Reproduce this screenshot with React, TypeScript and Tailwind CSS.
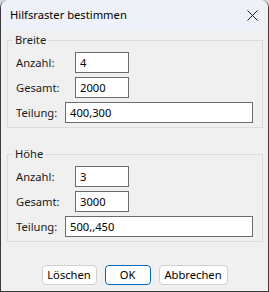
import React from 'react';

const font = { fontFamily: '"Noto Sans", "Segoe UI", sans-serif' };

function Field({ label, value, wide }: { label: string; value: string; wide?: boolean }) {
  return (
    <div className="flex items-center h-[21px]">
      <span className={`${wide ? 'w-[49px]' : 'w-[59px]'} text-[11.2px] text-[#1a1a1a] leading-none`}>{label}</span>
      <div
        className={`${wide ? 'w-[188px]' : 'w-[54px]'} h-[21px] bg-white border border-[#6b6b6b] flex items-center pl-[4px] text-[11.2px] text-black leading-none`}
      >
        {value}
      </div>
    </div>
  );
}

function Group({ title, rows }: { title: string; rows: [string, string][] }) {
  return (
    <div className="relative w-[256px] h-[88px] border border-[#dcdcdc] pl-[8px] pt-[11px] flex flex-col gap-[4px]">
      <span className="absolute -top-[9px] left-[5px] px-[2px] bg-[#f0f0f0] text-[11.2px] text-[#1a1a1a] leading-[16px]">
        {title}
      </span>
      {rows.map(([l, v], i) => (
        <Field key={l} label={l} value={v} wide={i === 2} />
      ))}
    </div>
  );
}

export default function App() {
  return (
    <div className="w-[269px] h-[292px] bg-[#d9d9d9]" style={font}>
      <div className="w-full h-full flex flex-col rounded-t-[8px] overflow-hidden border-x border-b border-[#3a3a3a] bg-[#f0f0f0]">
        {/* title bar */}
        <div className="h-[30px] bg-[#eef2f8] flex items-center justify-between pl-[9px] pr-[9px]">
          <span className="text-[11.2px] text-black leading-none">Hilfsraster bestimmen</span>
          <svg width="11" height="11" viewBox="0 0 11 11" className="mr-[1px]">
            <path d="M0.5 0.5 L10.5 10.5 M10.5 0.5 L0.5 10.5" stroke="#1a1a1a" strokeWidth="1" fill="none" />
          </svg>
        </div>

        {/* body */}
        <div className="flex-1 flex flex-col pl-[6px] pt-[10px]">
          <Group title="Breite" rows={[['Anzahl:', '4'], ['Gesamt:', '2000'], ['Teilung:', '400,300']]} />
          <div className="mt-[26px]">
            <Group title="Höhe" rows={[['Anzahl:', '3'], ['Gesamt:', '3000'], ['Teilung:', '500,,450']]} />
          </div>

          <div className="mt-[23px] flex justify-center gap-[8px] pr-[6px]">
            <button className="w-[55px] h-[20px] bg-white border border-[#d0d0d0] rounded-[4px] text-[11.2px] text-black leading-none">
              Löschen
            </button>
            <button className="w-[46px] h-[20px] bg-white border border-[#0067c0] rounded-[4px] text-[11.2px] text-black leading-none">
              OK
            </button>
            <button className="w-[69px] h-[20px] bg-white border border-[#d0d0d0] rounded-[4px] text-[11.2px] text-black leading-none">
              Abbrechen
            </button>
          </div>
        </div>
      </div>
    </div>
  );
}
